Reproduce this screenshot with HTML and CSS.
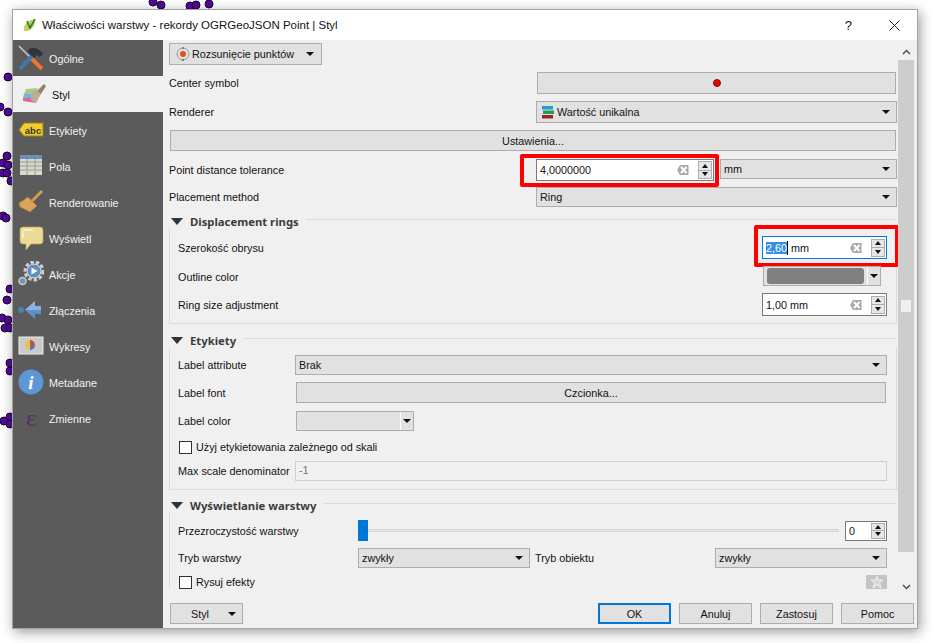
FILE: index.html
```html
<!DOCTYPE html>
<html lang="pl">
<head>
  <meta charset="UTF-8" />
  <title>Właściwości warstwy</title>
  <link rel="stylesheet" href="styles.css">
</head>
<body>

  <svg class="map" width="933" height="643" fill="#55099b" stroke="#16052a">
    <circle cx="153" cy="2" r="4"/><circle cx="161" cy="5" r="4"/><circle cx="190" cy="6" r="4"/><circle cx="196" cy="5" r="4"/><circle cx="209" cy="4" r="4"/>
    <circle cx="8" cy="77" r="4"/><circle cx="0" cy="107" r="4"/><circle cx="8" cy="112" r="4"/>
    <circle cx="7" cy="156" r="4"/><circle cx="3" cy="163" r="4"/><circle cx="8" cy="165" r="4"/><circle cx="3" cy="173" r="4"/><circle cx="7" cy="173" r="4"/><circle cx="11" cy="181" r="4"/>
    <circle cx="3" cy="216" r="4"/><circle cx="6" cy="218" r="4"/>
    <circle cx="10" cy="289" r="4"/><circle cx="7" cy="300" r="4"/><circle cx="2" cy="318" r="4"/><circle cx="8" cy="320" r="4"/><circle cx="5" cy="328" r="4"/><circle cx="10" cy="328" r="4"/>
    <circle cx="10" cy="363" r="4"/><circle cx="10" cy="371" r="4"/><circle cx="10" cy="417" r="4"/><circle cx="4" cy="421" r="4"/><circle cx="10" cy="424" r="4"/>
  </svg>

  <svg width="0" height="0" class="defs">
    <symbol id="clear" viewBox="0 0 12 12">
      <path d="M3 1h8.500v10H3L0 6z" fill="#a9a9a9"/>
      <path d="M4 3l5.500 6m0-6L4 9" stroke="#fff" stroke-width="2"/>
    </symbol>
  </svg>

  <div class="window">
    <div class="titlebar">
      <svg class="title-icon" width="14" height="14" viewBox="0 0 14 14">
        <path d="M1 13C1 7 4 2 12 1c1 6-3 11-9 12z" fill="#b5cf6a"/>
        <path d="M4 3l3 7 5-9" fill="none" stroke="#3f6d21" stroke-width="1.500"/>
        <path d="M1 8l3 5" stroke="#d8c95a" stroke-width="1.500"/>
      </svg>
      <span class="title-text">Właściwości warstwy - rekordy OGRGeoJSON Point | Styl</span>
      <span class="title-help">?</span>
      <svg class="title-close" width="11" height="11" viewBox="0 0 11 11"><path d="M.5.5l10 10m0-10l-10 10" stroke="#222" fill="none"/></svg>
    </div>

    <div class="body">
      <nav class="sidebar">
        <div class="nav-item">
          <svg width="26" height="26" viewBox="0 0 26 26">
            <path d="M1 1l12 12" stroke="#c8ccd0" stroke-width="1.500"/>
            <path d="M13 13l11 11" stroke="#e8792b" stroke-width="4"/>
            <path d="M2 24L15 10" stroke="#3f78b5" stroke-width="4"/>
            <path d="M10 5c4-4 10-3 15 4l-3 3-3-2-3 3-6-6z" fill="#33343a"/>
          </svg>
          <span>Ogólne</span>
        </div>
        <div class="nav-item active">
          <svg width="26" height="26" viewBox="0 0 26 26">
            <path d="M5 8l12-1-3 6L3 13z" fill="#a3c98c"/>
            <path d="M3 13l11 0-1 4L2 17z" fill="#7eaee0"/>
            <path d="M2 17l11 0 2 5-13-2z" fill="#d76a99"/>
            <path d="M10 13l5-4 5 4-5 9-5-3z" fill="#b9ae8e"/>
            <path d="M16 10l7-7 2 2-5 8z" fill="#8e8468"/>
          </svg>
          <span>Styl</span>
        </div>
        <div class="nav-item">
          <svg width="26" height="26" viewBox="0 0 26 26">
            <path d="M6 6h19v13H6l-5-6z" fill="#f0cc2e" stroke="#9a7f12"/>
            <text x="15" y="16.500" class="abc-text">abc</text>
          </svg>
          <span>Etykiety</span>
        </div>
        <div class="nav-item">
          <svg width="26" height="26" viewBox="0 0 26 26">
            <rect x="2" y="2" width="22" height="20" fill="#d8d8cc"/>
            <rect x="2" y="2" width="22" height="4" fill="#6a8fb8"/>
            <path d="M2 9h22M2 13h22M2 17h22M9 6v16M17 6v16" stroke="#9c9c90"/>
          </svg>
          <span>Pola</span>
        </div>
        <div class="nav-item">
          <svg width="26" height="26" viewBox="0 0 26 26">
            <path d="M14 12L24 2" stroke="#d89a4c" stroke-width="3"/>
            <path d="M10 8l9 9-7 6-10-5-1-4z" fill="#dca25a" stroke="#a87532" stroke-width=".7"/>
          </svg>
          <span>Renderowanie</span>
        </div>
        <div class="nav-item">
          <svg width="26" height="26" viewBox="0 0 26 26">
            <path d="M5 2h17q3 0 3 3v11q0 3-3 3H13l-5 6 0-6H5q-3 0-3-3V5q0-3 3-3z" fill="#ecdc94" stroke="#b9a95c" stroke-width=".7"/>
            <path d="M5 13V6q0-1 1-1h9" fill="none" stroke="#fff"/>
          </svg>
          <span>Wyświetl</span>
        </div>
        <div class="nav-item">
          <svg width="26" height="26" viewBox="0 0 26 26">
            <circle cx="16" cy="10" r="9" fill="none" stroke="#cfcfcf" stroke-width="3" stroke-dasharray="3.500 2"/>
            <circle cx="16" cy="10" r="7" fill="#5f8ec4" stroke="#e8e8e8"/>
            <path d="M13.500 6.500v7l6-3.500z" fill="#fff"/>
            <circle cx="4.500" cy="20" r="3.500" fill="#6d94bf" stroke="#c8c8c8" stroke-width="1.500"/>
          </svg>
          <span>Akcje</span>
        </div>
        <div class="nav-item">
          <svg width="26" height="26" viewBox="0 0 26 26">
            <path d="M7 13l10-9v5h6v8h-6v5z" fill="#5f8fc7"/>
            <path d="M7 13l10-9v5h6v4z" fill="#8cb3de"/>
            <circle cx="3" cy="13" r="3" fill="#4e7fb5"/>
          </svg>
          <span>Złączenia</span>
        </div>
        <div class="nav-item">
          <svg width="26" height="26" viewBox="0 0 26 26">
            <rect x="1" y="4" width="24" height="17" fill="#c9c9c9" stroke="#eee"/>
            <circle cx="12" cy="12" r="5" fill="#e8c14a"/>
            <path d="M12 12V7a5 5 0 0 1 5 5z" fill="#d34a3c"/>
            <path d="M12 12h5a5 5 0 0 1-5 5z" fill="#4a78c4"/>
          </svg>
          <span>Wykresy</span>
        </div>
        <div class="nav-item">
          <svg width="26" height="26" viewBox="0 0 26 26">
            <circle cx="13" cy="13" r="12.500" fill="#5d97d6"/>
            <text x="13" y="20" class="info-text">i</text>
          </svg>
          <span>Metadane</span>
        </div>
        <div class="nav-item">
          <svg width="26" height="26" viewBox="0 0 26 26">
            <text x="13" y="21" class="var-text">ε</text>
          </svg>
          <span>Zmienne</span>
        </div>
      </nav>

      <main class="main">
        <div class="scroll-wrap">
          <div class="form">
            <div class="combo renderer-type">
              <svg width="14" height="14" viewBox="0 0 14 14">
                <circle cx="7" cy="7" r="6" fill="none" stroke="#9a9a9a"/>
                <circle cx="7" cy="7" r="3" fill="#e8501c"/>
                <path d="M7 0v2M7 12v2" stroke="#3c8c4c" stroke-width="1.500"/>
              </svg>
              <span class="combo-text">Rozsunięcie punktów</span>
              <i class="arrow-down"></i>
            </div>

            <div class="top-row h22">
              <label>Center symbol</label>
              <button class="btn btn-wide"><i class="red-dot"></i></button>
            </div>

            <div class="top-row h22">
              <label>Renderer</label>
              <div class="combo">
                <svg width="12" height="13" viewBox="0 0 12 13">
                  <rect x="0" y="0" width="11" height="3.500" fill="#1ea0cf"/>
                  <rect x="1" y="4.500" width="11" height="3.500" fill="#1f9e5c"/>
                  <rect x="0" y="9" width="11" height="3.500" fill="#a5201c"/>
                </svg>
                <span class="combo-text">Wartość unikalna</span>
                <i class="arrow-down"></i>
              </div>
            </div>

            <button class="btn settings-btn">Ustawienia...</button>

            <div class="top-row tolerance-row">
              <label>Point distance tolerance</label>
              <div class="pair">
                <div class="spin tolerance-spin">
                  <span class="spin-text">4,0000000</span>
                  <svg class="clear-icon" width="12" height="12"><use href="#clear"/></svg>
                  <div class="spin-btns"><b><i class="arrow-up"></i></b><b><i class="arrow-down"></i></b></div>
                </div>
                <div class="combo unit-combo"><span class="combo-text">mm</span><i class="arrow-down"></i></div>
              </div>
              <div class="red-box tolerance-mark"></div>
            </div>

            <div class="top-row h20">
              <label>Placement method</label>
              <div class="combo"><span class="combo-text">Ring</span><i class="arrow-down"></i></div>
            </div>

            <section class="group first">
              <h3 class="group-head"><i class="arrow-head"></i><span>Displacement rings</span></h3>
              <div class="group-body rings">
                <div class="ring-row width-row">
                  <label>Szerokość obrysu</label>
                  <div class="spin ring-spin focused">
                    <span class="spin-text"><span class="selected">2,60</span><span class="caret"></span> mm</span>
                    <svg class="clear-icon" width="12" height="12"><use href="#clear"/></svg>
                    <div class="spin-btns"><b><i class="arrow-up"></i></b><b><i class="arrow-down"></i></b></div>
                  </div>
                  <div class="red-box width-mark"></div>
                </div>
                <div class="ring-row color-row">
                  <label>Outline color</label>
                  <div class="color-btn outline-color"><span class="swatch"></span><span class="color-drop"><i class="arrow-down"></i></span></div>
                </div>
                <div class="ring-row">
                  <label>Ring size adjustment</label>
                  <div class="spin ring-spin">
                    <span class="spin-text">1,00 mm</span>
                    <svg class="clear-icon" width="12" height="12"><use href="#clear"/></svg>
                    <div class="spin-btns"><b><i class="arrow-up"></i></b><b><i class="arrow-down"></i></b></div>
                  </div>
                </div>
              </div>
            </section>

            <section class="group second">
              <h3 class="group-head"><i class="arrow-head"></i><span>Etykiety</span></h3>
              <div class="group-body labels">
                <div class="label-row h20">
                  <label>Label attribute</label>
                  <div class="combo"><span class="combo-text">Brak</span><i class="arrow-down"></i></div>
                </div>
                <div class="label-row h21 font-row">
                  <label>Label font</label>
                  <button class="btn font-btn">Czcionka...</button>
                </div>
                <div class="label-row h20">
                  <label>Label color</label>
                  <div class="color-btn label-color"><span class="swatch-empty"></span><span class="color-drop"><i class="arrow-down"></i></span></div>
                </div>
                <div class="check-row scale-check"><i class="checkbox"></i><span>Użyj etykietowania zależnego od skali</span></div>
                <div class="label-row h20 scale-row">
                  <label>Max scale denominator</label>
                  <div class="disabled-input">-1</div>
                </div>
              </div>
            </section>

            <section class="group third">
              <h3 class="group-head"><i class="arrow-head"></i><span>Wyświetlanie warstwy</span></h3>
              <div class="group-body display">
                <div class="display-row opacity-row">
                  <label>Przezroczystość warstwy</label>
                  <div class="slider"><i class="slider-handle"></i></div>
                  <div class="spin opacity-spin">
                    <span class="spin-text">0</span>
                    <div class="spin-btns"><b><i class="arrow-up"></i></b><b><i class="arrow-down"></i></b></div>
                  </div>
                </div>
                <div class="display-row blend-row">
                  <label>Tryb warstwy</label>
                  <div class="combo blend-combo"><span class="combo-text">zwykły</span><i class="arrow-down"></i></div>
                  <label class="blend-label">Tryb obiektu</label>
                  <div class="combo blend-combo"><span class="combo-text">zwykły</span><i class="arrow-down"></i></div>
                </div>
                <div class="display-row effects-row">
                  <div class="check-row"><i class="checkbox"></i><span>Rysuj efekty</span></div>
                  <div class="star-btn">
                    <svg width="14" height="14" viewBox="0 0 14 14"><path d="M7 1l1.800 4H13l-3.400 2.800L11 13 7 10.200 3 13l1.400-5.200L1 5h4.200z" fill="#d9d9d9" stroke="#eee"/></svg>
                  </div>
                </div>
              </div>
            </section>
          </div>

          <div class="scrollbar">
            <span class="scroll-arrow"><svg width="9" height="6" viewBox="0 0 9 6"><path d="M1 5l3.500-3.500L8 5" fill="none" stroke="#505050" stroke-width="1.500"/></svg></span>
            <div class="scroll-thumb"><i class="scroll-mark"></i></div>
            <span class="scroll-arrow bottom"><svg width="9" height="6" viewBox="0 0 9 6"><path d="M1 1l3.500 3.500L8 1" fill="none" stroke="#505050" stroke-width="1.500"/></svg></span>
          </div>
        </div>

        <footer class="footer">
          <button class="btn style-btn"><span>Styl</span><i class="arrow-down"></i></button>
          <div class="footer-actions">
            <button class="btn action default">OK</button>
            <button class="btn action">Anuluj</button>
            <button class="btn action">Zastosuj</button>
            <button class="btn action">Pomoc</button>
          </div>
        </footer>
      </main>
    </div>
  </div>

</body>
</html>
```

FILE: styles.css
```css
html, body {
  margin: 0;
  height: 643px;
  overflow: hidden;
  background: #fff;
}
body {
  position: relative;
  font-family: "Liberation Sans", Arial, sans-serif;
  font-size: 10.800px;
  color: #111;
}
.map {
  position: absolute;
  left: 0;
  top: 0;
}
.defs {
  position: absolute;
}
label {
  display: block;
  white-space: nowrap;
  padding-bottom: 1px;
}
i {
  display: block;
}

.window {
  position: relative;
  top: 9px;
  width: 904px;
  height: 618px;
  margin-left: 12px;
  border: 1px solid #a3a3a3;
  background: #f0f0f0;
  box-shadow: 2px 3px 12px rgba(0, 0, 0, 0.4);
}

.titlebar {
  display: flex;
  align-items: center;
  height: 30px;
  background: #fff;
  padding-left: 10px;
  box-sizing: border-box;
}
.title-icon {
  margin-right: 5px;
}
.title-text {
  flex: 1;
  font-size: 11.500px;
  color: #111;
}
.title-help {
  font-size: 13px;
  margin-right: 37px;
}
.title-close {
  margin-right: 17px;
}

.body {
  display: flex;
  height: 588px;
}

.sidebar {
  width: 150px;
  background: #5b5b5b;
  flex-shrink: 0;
}
.nav-item {
  display: flex;
  align-items: center;
  height: 36px;
  padding-left: 5px;
  color: #f2f2f2;
}
.nav-item span {
  padding-top: 1px;
}
.nav-item svg {
  margin-right: 5px;
  flex-shrink: 0;
}
.nav-item.active {
  background: #f0f0f0;
  color: #111;
  padding-left: 8px;
}
.abc-text {
  font: bold 9.500px "Liberation Sans", sans-serif;
  fill: #333;
  text-anchor: middle;
}
.info-text {
  font: italic bold 19px "Liberation Serif", serif;
  fill: #fff;
  text-anchor: middle;
}
.var-text {
  font: 24px "Liberation Serif", serif;
  fill: #4f2f6e;
  text-anchor: middle;
}

.main {
  flex: 1;
  display: flex;
  flex-direction: column;
  padding: 3px 3px 4px 6px;
  min-width: 0;
}
.scroll-wrap {
  display: flex;
  height: 553px;
}
.form {
  width: 728px;
  flex-shrink: 0;
}

.combo, .btn, .color-btn {
  background: #e1e1e1;
  border: 1px solid #adadad;
  box-sizing: border-box;
}
.combo {
  display: flex;
  align-items: center;
  padding: 0 6px 0 3px;
  height: 100%;
}
.combo svg {
  margin: 0 3px 0 2px;
}
.combo-text {
  flex: 1;
  white-space: nowrap;
  padding-bottom: 1px;
}
.btn {
  display: block;
  font: inherit;
  color: inherit;
  padding: 0;
  text-align: center;
}
.arrow-down, .arrow-up {
  width: 0;
  height: 0;
  border-left: 4px solid transparent;
  border-right: 4px solid transparent;
}
.arrow-down {
  border-top: 4px solid #111;
}
.arrow-up {
  border-bottom: 4px solid #111;
}

.renderer-type {
  width: 153px;
  height: 22px;
  padding-left: 4px;
}
.renderer-type svg {
  margin-right: 2px;
}
.renderer-type .arrow-down {
  margin-right: 1px;
}

.top-row {
  display: grid;
  grid-template-columns: 367px 361px;
  align-items: center;
  position: relative;
  margin-top: 7px;
}
.h20 { height: 20px; }
.h21 { height: 21px; }
.h22 { height: 22px; }
.btn-wide {
  height: 100%;
  width: 359px;
  margin-left: 1px;
}
.red-dot {
  width: 8px;
  height: 8px;
  border-radius: 50%;
  background: #f00000;
  border: 1px solid #7a1010;
  box-sizing: border-box;
  margin: 0 auto;
}
.settings-btn {
  width: 726px;
  height: 21px;
  margin: 7px 0 0 1px;
}
.tolerance-row {
  height: 22px;
  margin-top: 8px;
}
.tolerance-row + .top-row {
  margin-top: 6px;
}
.pair {
  display: flex;
  gap: 6px;
  align-items: flex-start;
}
.unit-combo {
  width: 177px;
  height: 20px;
}

.spin {
  display: flex;
  align-items: center;
  background: #fff;
  border: 1px solid #7a7a7a;
  box-sizing: border-box;
  height: 23px;
  padding-left: 3px;
}
.spin.focused {
  border-color: #0078d7;
}
.spin-text {
  flex: 1;
  white-space: nowrap;
}
.selected {
  background: #3390e8;
  color: #fff;
}
.caret {
  display: inline-block;
  width: 1px;
  height: 14px;
  background: #000;
  vertical-align: -3px;
}
.clear-icon {
  margin-right: 9px;
}
.spin-btns {
  display: flex;
  flex-direction: column;
  width: 14px;
  height: 18px;
  margin-right: 1px;
  border: 1px solid #adadad;
  box-sizing: border-box;
  background: #e6e6e6;
}
.spin-btns b {
  flex: 1;
  display: flex;
  align-items: center;
  justify-content: center;
}
.spin-btns b + b {
  border-top: 1px solid #adadad;
}
.spin-btns i {
  border-left-width: 3px;
  border-right-width: 3px;
}
.tolerance-spin {
  width: 178px;
  height: 22px;
}
.ring-spin {
  width: 125px;
}

.red-box {
  position: absolute;
  border: 4px solid #f00;
  border-radius: 2px;
  box-sizing: border-box;
  pointer-events: none;
}
.tolerance-mark {
  left: 351px;
  top: -5px;
  width: 199px;
  height: 33px;
}
.width-mark {
  right: -12px;
  top: -11px;
  width: 145px;
  height: 42px;
}

.group-head {
  display: flex;
  align-items: center;
  height: 14px;
  margin: 0;
  font-family: "Noto Sans", sans-serif;
  font-size: 11.300px;
  font-weight: 700;
  color: #3c3c3c;
  position: relative;
  padding-left: 2px;
}
.group-head span {
  padding: 0 7px;
  white-space: nowrap;
  background: #f0f0f0;
  position: relative;
}
.group-head::after {
  content: "";
  flex: 1;
  border-top: 1px solid #dcdcdc;
  margin-top: -4px;
}
.arrow-head {
  width: 0;
  height: 0;
  border-left: 6px solid transparent;
  border-right: 6px solid transparent;
  border-top: 7px solid #333;
  flex-shrink: 0;
}
.group-body {
  border-left: 1px solid #dcdcdc;
  border-right: 1px solid #dcdcdc;
  border-bottom: 1px solid #dcdcdc;
  padding: 8px 9px 7px 8px;
}
.first { margin-top: 7px; }
.second { margin-top: 9px; }
.third { margin-top: 8px; }

.ring-row {
  display: flex;
  align-items: center;
  justify-content: space-between;
  position: relative;
  margin-bottom: 7px;
}
.ring-row:last-child {
  margin-bottom: 0;
}
.ring-row label, .font-row label, .opacity-row label {
  padding: 1px 0 0;
}
.color-row {
  height: 20px;
}
.color-btn {
  display: flex;
  align-items: stretch;
  height: 20px;
}
.outline-color {
  width: 118px;
  margin-right: 6px;
}
.swatch {
  flex: 1;
  background: #808080;
  border-radius: 3px;
  margin: 1px 0 1px 3px;
}
.swatch-empty {
  flex: 1;
}
.color-drop {
  width: 12px;
  margin-left: 3px;
  border-left: 1px solid #fff;
  display: flex;
  align-items: center;
  justify-content: center;
}

.label-row {
  display: grid;
  grid-template-columns: 117px 592px;
  align-items: center;
  margin-bottom: 7px;
}
.font-row {
  margin-bottom: 8px;
}
.font-btn {
  width: 590px;
  height: 100%;
  margin-left: 1px;
}
.label-color {
  width: 118px;
  margin-left: 1px;
}
.label-row .combo {
  padding-left: 3px;
}
.check-row {
  display: flex;
  align-items: center;
  gap: 4px;
  height: 14px;
  padding-left: 1px;
}
.checkbox {
  width: 13px;
  height: 13px;
  background: #fff;
  border: 1px solid #333;
  box-sizing: border-box;
}
.scale-check {
  margin: 9px 0 7px;
}
.scale-row {
  margin-bottom: 1px;
}
.disabled-input {
  height: 100%;
  border: 1px solid #d0d0d0;
  background: #f0f0f0;
  box-sizing: border-box;
  color: #777;
  padding: 0 3px;
  line-height: 17px;
}

.third .group-body {
  border-bottom: 0;
  border-right: 0;
  padding-bottom: 0;
}
.display-row {
  display: flex;
  align-items: center;
}
.display-row label {
  width: 180px;
  flex-shrink: 0;
}
.opacity-row {
  height: 21px;
}
.slider {
  position: relative;
  width: 481px;
  height: 3px;
  background: #e1e6e6;
  border: 1px solid #d4d8d8;
  box-sizing: border-box;
}
.slider-handle {
  position: absolute;
  left: -1px;
  top: -10px;
  width: 10px;
  height: 21px;
  background: #0078d7;
}
.opacity-spin {
  width: 42px;
  height: 20px;
  margin-left: 6px;
}
.opacity-spin .spin-btns {
  height: 16px;
}
.blend-row {
  height: 20px;
  margin-top: 7px;
}
.blend-combo {
  width: 172px;
  flex-shrink: 0;
}
.display-row .blend-label {
  width: 185px;
  padding-left: 5px;
  box-sizing: border-box;
}
.effects-row {
  justify-content: space-between;
  margin-top: 7px;
  height: 14px;
  padding-right: 1px;
  width: 709px;
}
.star-btn {
  display: flex;
  align-items: center;
  justify-content: center;
  width: 21px;
  height: 14px;
  background: #c4c4c4;
  overflow: hidden;
}

.scrollbar {
  position: relative;
  width: 16px;
  height: 553px;
  margin-left: 1px;
  background: #f0f0f0;
}
.scroll-arrow {
  position: absolute;
  left: 3.500px;
  top: 6px;
  line-height: 0;
}
.scroll-arrow.bottom {
  top: auto;
  bottom: 6px;
}
.scroll-thumb {
  position: absolute;
  top: 17px;
  left: 0;
  width: 100%;
  height: 492px;
  background: #cdcdcd;
}
.scroll-mark {
  position: absolute;
  left: 3px;
  top: 240px;
  width: 10px;
  height: 12px;
  background: #f0f0f0;
}

.footer {
  display: flex;
  justify-content: space-between;
  margin-top: 7px;
  padding-left: 1px;
}
.style-btn {
  display: flex;
  align-items: center;
  justify-content: space-between;
  width: 73px;
  height: 21px;
  padding: 0 6px 0 20px;
}
.footer-actions {
  display: flex;
  gap: 8px;
}
.action {
  width: 73px;
  height: 21px;
}
.action.default {
  border: 2px solid #0078d7;
}
```
